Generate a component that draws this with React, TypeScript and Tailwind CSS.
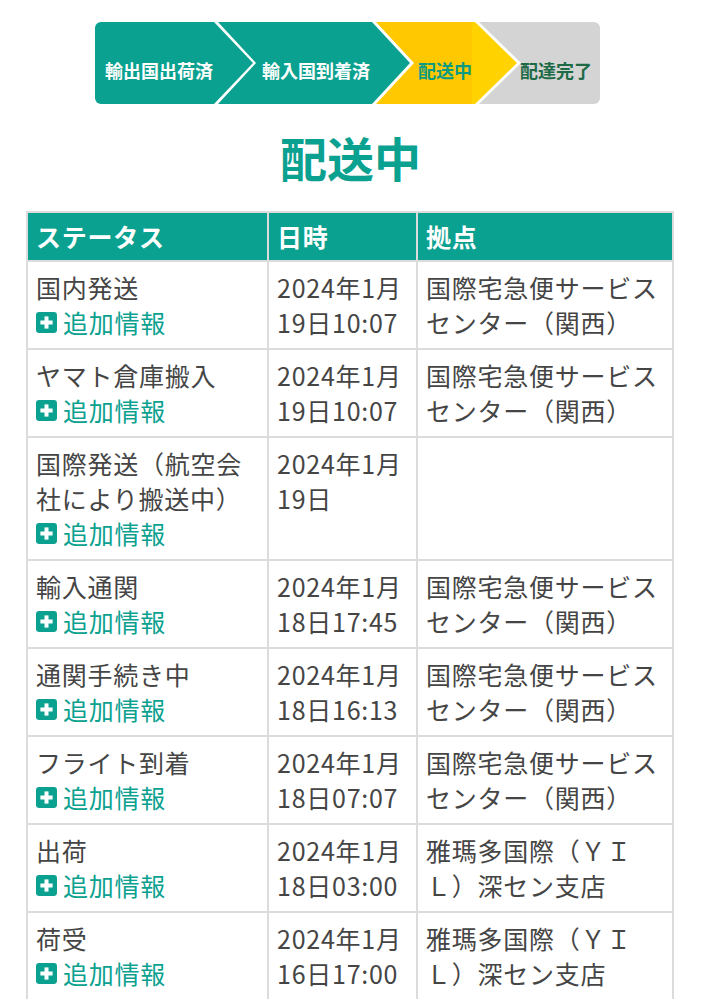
const steps = [
  {
    label: "輸出国出荷済",
    className: "w-[158px] bg-[#0ba190] text-white pl-[10px] [clip-path:polygon(0_0,calc(100%-39px)_0,100%_50%,calc(100%-39px)_100%,0_100%)]",
  },
  {
    label: "輸入国到着済",
    className: "w-[192px] -ml-[35px] bg-[#0ba190] text-white pl-[44px] [clip-path:polygon(0_0,calc(100%-38px)_0,100%_50%,calc(100%-38px)_100%,0_100%,38px_50%)]",
  },
  {
    label: "配送中",
    className: "w-[141px] -ml-[34px] bg-[linear-gradient(to_right,#ffc800_96px,#ffd200_96px)] text-[#0e9b82] pl-[42px] [clip-path:polygon(0_0,calc(100%-42px)_0,100%_50%,calc(100%-42px)_100%,0_100%,38px_50%)]",
  },
  {
    label: "配達完了",
    className: "flex-1 -ml-[38px] bg-[#d4d4d4] text-[#1d6a47] pl-[41px] [clip-path:polygon(0_0,100%_0,100%_100%,0_100%,42px_50%)]",
  },
];

type Row = { status: string[]; date: string[]; place: string[] };

const rows: Row[] = [
  { status: ["国内発送"], date: ["2024年1月", "19日10:07"], place: ["国際宅急便サービス", "センター（関西）"] },
  { status: ["ヤマト倉庫搬入"], date: ["2024年1月", "19日10:07"], place: ["国際宅急便サービス", "センター（関西）"] },
  { status: ["国際発送（航空会", "社により搬送中）"], date: ["2024年1月", "19日"], place: [] },
  { status: ["輸入通関"], date: ["2024年1月", "18日17:45"], place: ["国際宅急便サービス", "センター（関西）"] },
  { status: ["通関手続き中"], date: ["2024年1月", "18日16:13"], place: ["国際宅急便サービス", "センター（関西）"] },
  { status: ["フライト到着"], date: ["2024年1月", "18日07:07"], place: ["国際宅急便サービス", "センター（関西）"] },
  { status: ["出荷"], date: ["2024年1月", "18日03:00"], place: ["雅瑪多国際（ＹＩ", "Ｌ）深セン支店"] },
  { status: ["荷受"], date: ["2024年1月", "16日17:00"], place: ["雅瑪多国際（ＹＩ", "Ｌ）深セン支店"] },
];

function PlusSquare() {
  return (
    <svg width="21" height="21" viewBox="0 0 20 20" className="mr-[6px] shrink-0">
      <rect x="0" y="0" width="20" height="20" rx="3" fill="#0ba190" />
      <rect x="8.1" y="4.2" width="3.8" height="11.6" fill="#fff" />
      <rect x="4.2" y="8.1" width="11.6" height="3.8" fill="#fff" />
    </svg>
  );
}

function Lines({ lines }: { lines: string[] }) {
  return (
    <>
      {lines.map((l) => (
        <div key={l}>{l}</div>
      ))}
    </>
  );
}

export default function App() {
  return (
    <main
      className="min-h-screen bg-white pt-[22px]"
      style={{ fontFamily: '"Noto Sans CJK JP", "Noto Sans", sans-serif' }}
    >
      <div className="ml-[95px] flex h-[82px] w-[505px] overflow-hidden rounded-[6px] bg-white">
        {steps.map((s) => (
          <div
            key={s.label}
            className={`flex h-full shrink-0 items-center pt-[14px] text-[18px] font-bold leading-none ${s.className}`}
          >
            {s.label}
          </div>
        ))}
      </div>

      <h1 className="mt-[23px] text-center text-[47px] font-bold leading-[60px] text-[#0ba190]">配送中</h1>

      <table className="ml-[26px] mt-[24px] w-[648px] table-fixed border-collapse text-[25px] leading-[35px] tracking-[0.03em] text-[#454545]">
        <colgroup>
          <col className="w-[241px]" />
          <col className="w-[149px]" />
          <col />
        </colgroup>
        <thead>
          <tr className="bg-[#0ba190] text-left text-white">
            <th className="h-[49px] border-2 border-[#dcdcdc] px-[8px] font-bold">ステータス</th>
            <th className="border-2 border-[#dcdcdc] px-[8px] font-bold">日時</th>
            <th className="border-2 border-[#dcdcdc] px-[8px] font-bold">拠点</th>
          </tr>
        </thead>
        <tbody>
          {rows.map((r, i) => (
            <tr key={i} className="align-top">
              <td className="border-2 border-[#dcdcdc] px-[8px] py-[8px]">
                <Lines lines={r.status} />
                <div className="flex items-center text-[#0ba190]">
                  <PlusSquare />
                  追加情報
                </div>
              </td>
              <td className="border-2 border-[#dcdcdc] px-[8px] py-[8px]">
                <Lines lines={r.date} />
              </td>
              <td className="border-2 border-[#dcdcdc] px-[8px] py-[8px]">
                <Lines lines={r.place} />
              </td>
            </tr>
          ))}
        </tbody>
      </table>
    </main>
  );
}
